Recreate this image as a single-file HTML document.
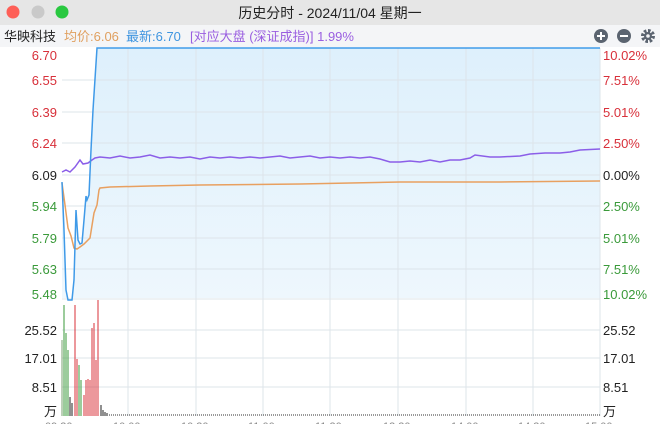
<!DOCTYPE html>
<html><head><meta charset="utf-8"><style>
body{margin:0;width:660px;height:424px;overflow:hidden;background:#fff;font-family:"Liberation Sans","Noto Sans CJK SC",sans-serif;}
</style></head><body>
<svg width="660" height="424" xmlns="http://www.w3.org/2000/svg" style="position:absolute;left:0;top:0">
<defs><linearGradient id="g" x1="0" y1="0" x2="0" y2="1"><stop offset="0" stop-color="#def0fc"/><stop offset="1" stop-color="#eef7fd"/></linearGradient></defs>
<rect x="0" y="0" width="660" height="25" fill="#e6e6e6"/>
<rect x="0" y="25" width="660" height="22" fill="#f4f5f7"/>
<circle cx="13" cy="12" r="6.5" fill="#fe5f57"/>
<circle cx="38" cy="12" r="6.5" fill="#c9c9c9"/>
<circle cx="62" cy="12" r="6.5" fill="#29c840"/>
<text x="330" y="18" text-anchor="middle" font-size="14" fill="#222">历史分时 - 2024/11/04 星期一</text>
<text x="4" y="41" font-size="13" fill="#222">华映科技</text>
<text x="64" y="41" font-size="13" fill="#e0a060">均价:6.06</text>
<text x="126" y="41" font-size="13" fill="#3f95e0">最新:6.70</text>
<text x="190" y="41" font-size="13" fill="#9a5ee0">[对应大盘 (深证成指)] 1.99%</text>
<circle cx="601" cy="36" r="7" fill="#5b6470"/><rect x="597" y="35" width="8" height="2" fill="#fff"/><rect x="600" y="32" width="2" height="8" fill="#fff"/>
<circle cx="624" cy="36" r="7" fill="#5b6470"/><rect x="620" y="35" width="8" height="2" fill="#fff"/>
<circle cx="648" cy="36" r="5" fill="none" stroke="#5b6470" stroke-width="4" stroke-dasharray="2.4 1.5"/><circle cx="648" cy="36" r="4" fill="#5b6470"/><circle cx="648" cy="36" r="1.8" fill="#f4f5f7"/>
<path d="M62,182 L64,230 L66,290 L68,300 L72,300 L74,280 L76,210 L78,240 L80,244 L82,243 L84,220 L86,196 L87,200 L89,195 L91,150 L93,110 L97,48 L600,48 L600,298 L62,298 Z" fill="url(#g)"/>
<g stroke="#dde4ea" stroke-width="1">
<line x1="62" y1="80" x2="600" y2="80"/><line x1="62" y1="112" x2="600" y2="112"/><line x1="62" y1="143" x2="600" y2="143"/><line x1="62" y1="175" x2="600" y2="175"/><line x1="62" y1="206" x2="600" y2="206"/><line x1="62" y1="238" x2="600" y2="238"/><line x1="62" y1="269" x2="600" y2="269"/><line x1="62" y1="299" x2="600" y2="299"/>
<line x1="62" y1="330" x2="600" y2="330"/><line x1="62" y1="358" x2="600" y2="358"/><line x1="62" y1="387" x2="600" y2="387"/>
<line x1="128" y1="48" x2="128" y2="416"/><line x1="196" y1="48" x2="196" y2="416"/><line x1="263" y1="48" x2="263" y2="416"/><line x1="330" y1="48" x2="330" y2="416"/><line x1="398" y1="48" x2="398" y2="416"/><line x1="466" y1="48" x2="466" y2="416"/><line x1="533" y1="48" x2="533" y2="416"/><line x1="600" y1="48" x2="600" y2="416"/>
</g>
<polyline fill="none" stroke="#8b5ee8" stroke-width="1.5" points="62,172 66,170 70,172 75,167 80,160 83,164 88,163 92,160 95,158 100,157 110,158 120,156 130,158 140,157 150,155 160,158 170,157 180,158 190,157 200,159 210,157 220,158 230,157 240,158 250,157 260,158 270,157 280,156 290,158 300,157 310,156 320,158 330,157 340,158 350,157 360,158 370,157 380,159 390,162 400,162 410,161 420,162 430,160 440,162 450,160 460,160 470,158 475,155 490,157 500,157 520,156 530,154 545,153 560,153 570,152 580,150 600,149"/>
<polyline fill="none" stroke="#e8a060" stroke-width="1.5" points="62,183 65,205 68,228 71,236 74,248 77,249 80,247 84,244 90,238 94,213 97,205 99,190 100,188 110,187 150,186 200,185 300,184 400,182 500,182 600,181"/>
<polyline fill="none" stroke="#3f9ae8" stroke-width="1.5" points="62,182 64,230 66,290 68,300 72,300 74,280 76,210 78,240 80,244 82,243 84,220 86,196 87,200 89,195 91,150 93,110 97,48 600,48"/>
<g font-size="13" text-anchor="end">
<text x="57" y="60" fill="#d8303a">6.70</text><text x="57" y="85" fill="#d8303a">6.55</text><text x="57" y="117" fill="#d8303a">6.39</text><text x="57" y="148" fill="#d8303a">6.24</text><text x="57" y="180" fill="#222">6.09</text><text x="57" y="211" fill="#3a9a3a">5.94</text><text x="57" y="243" fill="#3a9a3a">5.79</text><text x="57" y="274" fill="#3a9a3a">5.63</text><text x="57" y="299" fill="#3a9a3a">5.48</text>
<text x="57" y="335" fill="#222">25.52</text><text x="57" y="363" fill="#222">17.01</text><text x="57" y="392" fill="#222">8.51</text><text x="57" y="416" fill="#222">万</text>
</g>
<g font-size="13">
<text x="603" y="60" fill="#d8303a">10.02%</text><text x="603" y="85" fill="#d8303a">7.51%</text><text x="603" y="117" fill="#d8303a">5.01%</text><text x="603" y="148" fill="#d8303a">2.50%</text><text x="603" y="180" fill="#222">0.00%</text><text x="603" y="211" fill="#3a9a3a">2.50%</text><text x="603" y="243" fill="#3a9a3a">5.01%</text><text x="603" y="274" fill="#3a9a3a">7.51%</text><text x="603" y="299" fill="#3a9a3a">10.02%</text>
<text x="603" y="335" fill="#222">25.52</text><text x="603" y="363" fill="#222">17.01</text><text x="603" y="392" fill="#222">8.51</text><text x="603" y="416" fill="#222">万</text>
</g>
<g stroke-width="1">
<line x1="62" y1="416" x2="62" y2="340" stroke="#7aa070"/><line x1="64" y1="416" x2="64" y2="305" stroke="#3a9a3a"/><line x1="66" y1="416" x2="66" y2="333" stroke="#3a9a3a"/><line x1="68" y1="416" x2="68" y2="350" stroke="#3a9a3a"/>
<line x1="70" y1="416" x2="70" y2="397" stroke="#222"/><line x1="72" y1="416" x2="72" y2="403" stroke="#222"/>
<line x1="75" y1="416" x2="75" y2="305" stroke="#d8303a"/><line x1="77" y1="416" x2="77" y2="359" stroke="#d8303a"/>
<line x1="79" y1="416" x2="79" y2="365" stroke="#3a9a3a"/><line x1="81" y1="416" x2="81" y2="380" stroke="#3a9a3a"/>
<line x1="84" y1="416" x2="84" y2="395" stroke="#d8303a"/><line x1="86" y1="416" x2="86" y2="380" stroke="#d8303a"/><line x1="88" y1="416" x2="88" y2="379" stroke="#d8303a"/><line x1="90" y1="416" x2="90" y2="380" stroke="#d8303a"/><line x1="92" y1="416" x2="92" y2="328" stroke="#d8303a"/><line x1="94" y1="416" x2="94" y2="323" stroke="#d8303a"/><line x1="96" y1="416" x2="96" y2="360" stroke="#d8303a"/><line x1="98" y1="416" x2="98" y2="300" stroke="#d8303a"/>
<line x1="101" y1="416" x2="101" y2="405" stroke="#222"/><line x1="103" y1="416" x2="103" y2="410" stroke="#222"/><line x1="105" y1="416" x2="105" y2="412" stroke="#222"/><line x1="107" y1="416" x2="107" y2="413" stroke="#222"/>
</g>
<line x1="109" y1="415" x2="600" y2="415" stroke="#333" stroke-width="1" stroke-dasharray="1 1"/>
<g font-size="11" fill="#888"><text x="45" y="430">09:30</text><text x="113" y="430">10:00</text><text x="181" y="430">10:30</text><text x="248" y="430">11:00</text><text x="315" y="430">11:30</text><text x="383" y="430">13:30</text><text x="451" y="430">14:00</text><text x="518" y="430">14:30</text><text x="585" y="430">15:00</text></g>
</svg>
</body></html>
